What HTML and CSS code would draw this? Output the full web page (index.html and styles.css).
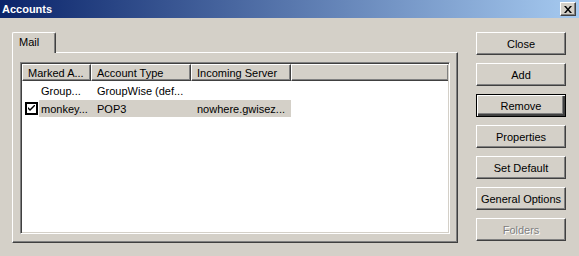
FILE: index.html
```html
<!DOCTYPE html>
<html lang="en">
<head>
    <meta charset="UTF-8">
    <title>Accounts</title>
    <link rel="stylesheet" href="styles.css">
</head>
<body>
    <div class="window">
        <div class="titlebar">
            <span class="title">Accounts</span>
            <div class="title-close">
                <svg width="8" height="7" viewBox="0 0 8 7">
                    <path d="M0 0h2l2 2.5L6 0h2L5 3.5 8 7H6L4 4.5 2 7H0l3-3.5z" fill="#000"/>
                </svg>
            </div>
        </div>
        <div class="content">
            <div class="tabs-area">
                <div class="tab-strip">
                    <div class="tab">Mail</div>
                    <div class="tab-fill"></div>
                </div>
                <div class="tab-panel">
                    <div class="listview">
                        <div class="list-header">
                            <div class="col col-1">Marked A...</div>
                            <div class="col col-2">Account Type</div>
                            <div class="col col-3">Incoming Server</div>
                            <div class="col col-fill"></div>
                        </div>
                        <div class="list-row">
                            <div class="check-cell"></div>
                            <div class="row-cells">
                                <div class="cell cell-1">Group...</div>
                                <div class="cell cell-2">GroupWise (def...</div>
                                <div class="cell cell-3"></div>
                            </div>
                        </div>
                        <div class="list-row">
                            <div class="check-cell"><span class="checkbox"><svg width="7" height="7" viewBox="0 0 7 7"><path d="M0 2v2l2 2 5-5V-1L2 4z" fill="#000"/></svg></span></div>
                            <div class="row-cells selected">
                                <div class="cell cell-1">monkey...</div>
                                <div class="cell cell-2">POP3</div>
                                <div class="cell cell-3">nowhere.gwisez...</div>
                            </div>
                        </div>
                    </div>
                </div>
            </div>
            <div class="buttons">
                <div class="btn">Close</div>
                <div class="btn">Add</div>
                <div class="btn btn-default">Remove</div>
                <div class="btn">Properties</div>
                <div class="btn">Set Default</div>
                <div class="btn">General Options</div>
                <div class="btn btn-disabled">Folders</div>
            </div>
        </div>
    </div>
</body>
</html>
```

FILE: styles.css
```css
body {
    margin: 0;
    padding: 0;
    font-family: "Liberation Sans", Arial, sans-serif;
    font-size: 11px;
    color: #000;
    background-color: #d4d0c8;
}
.window {
    width: 579px;
    height: 256px;
    background-color: #d4d0c8;
}
.titlebar {
    height: 18px;
    display: flex;
    align-items: center;
    justify-content: space-between;
    padding: 0 3px 0 2px;
    background: linear-gradient(to right, #0a246a, #a6caf0);
}
.title {
    color: #fff;
    font-weight: bold;
    font-size: 11px;
}
.title-close {
    width: 16px;
    height: 14px;
    box-sizing: border-box;
    display: flex;
    align-items: center;
    justify-content: center;
    background-color: #d4d0c8;
    border-top: 1px solid #fff;
    border-left: 1px solid #fff;
    border-right: 1px solid #404040;
    border-bottom: 1px solid #404040;
    box-shadow: inset -1px -1px 0 #808080;
}
.content {
    display: flex;
    gap: 18px;
    padding: 14px 13px 0 12px;
}
.tabs-area {
    width: 446px;
}
.tab-strip {
    display: flex;
    height: 21px;
}
.tab {
    width: 44px;
    box-sizing: border-box;
    border-top: 1px solid #fff;
    border-left: 1px solid #fff;
    border-right: 1px solid #404040;
    box-shadow: inset -1px 0 0 #808080;
    border-radius: 2px 2px 0 0;
    padding: 3px 0 0 6px;
}
.tab-fill {
    flex: 1;
    border-bottom: 1px solid #fff;
    border-right: 1px solid #404040;
    margin-top: 20px;
}
.tab-panel {
    height: 190px;
    box-sizing: border-box;
    border-left: 1px solid #fff;
    border-right: 1px solid #404040;
    border-bottom: 1px solid #404040;
    box-shadow: inset -1px -1px 0 #808080;
    padding: 9px 0 0 7px;
}
.listview {
    width: 430px;
    height: 172px;
    box-sizing: border-box;
    background-color: #fff;
    border-top: 1px solid #808080;
    border-left: 1px solid #808080;
    border-right: 1px solid #fff;
    border-bottom: 1px solid #fff;
    box-shadow: inset 1px 1px 0 #404040, inset -1px -1px 0 #d4d0c8;
    padding: 1px;
}
.list-header {
    display: flex;
    height: 17px;
}
.col {
    box-sizing: border-box;
    background-color: #d4d0c8;
    border-top: 1px solid #fff;
    border-left: 1px solid #fff;
    border-right: 1px solid #404040;
    border-bottom: 1px solid #404040;
    box-shadow: inset -1px -1px 0 #808080;
    padding: 2px 0 0 5px;
    white-space: nowrap;
}
.col-1 {
    width: 69px;
}
.col-2 {
    width: 100px;
}
.col-3 {
    width: 100px;
}
.col-fill {
    flex: 1;
    border-right: none;
}
.list-row {
    display: flex;
    height: 17px;
    margin-top: 1px;
}
.check-cell {
    width: 17px;
    display: flex;
    align-items: center;
    padding-left: 3px;
    box-sizing: border-box;
}
.checkbox {
    width: 13px;
    height: 13px;
    box-sizing: border-box;
    border: 2px solid #000;
    background-color: #fff;
    display: flex;
    align-items: center;
    justify-content: center;
}
.row-cells {
    display: flex;
    align-items: center;
}
.row-cells.selected {
    background-color: #d4d0c8;
}
.cell {
    white-space: nowrap;
}
.cell-1 {
    width: 52px;
    padding-left: 2px;
    box-sizing: border-box;
}
.cell-2 {
    width: 100px;
    padding-left: 6px;
    box-sizing: border-box;
}
.cell-3 {
    width: 100px;
    padding-left: 6px;
    box-sizing: border-box;
}
.buttons {
    display: flex;
    flex-direction: column;
    gap: 8px;
    width: 90px;
}
.btn {
    height: 23px;
    box-sizing: border-box;
    display: flex;
    align-items: center;
    justify-content: center;
    border-top: 1px solid #fff;
    border-left: 1px solid #fff;
    border-right: 1px solid #404040;
    border-bottom: 1px solid #404040;
    box-shadow: inset -1px -1px 0 #808080;
    white-space: nowrap;
}
.btn-default {
    border: 1px solid #000;
    box-shadow: inset 1px 1px 0 #fff, inset -2px -2px 0 #404040, inset -3px -3px 0 #808080;
}
.btn-disabled {
    color: #808080;
    text-shadow: 1px 1px 0 #fff;
}
```
